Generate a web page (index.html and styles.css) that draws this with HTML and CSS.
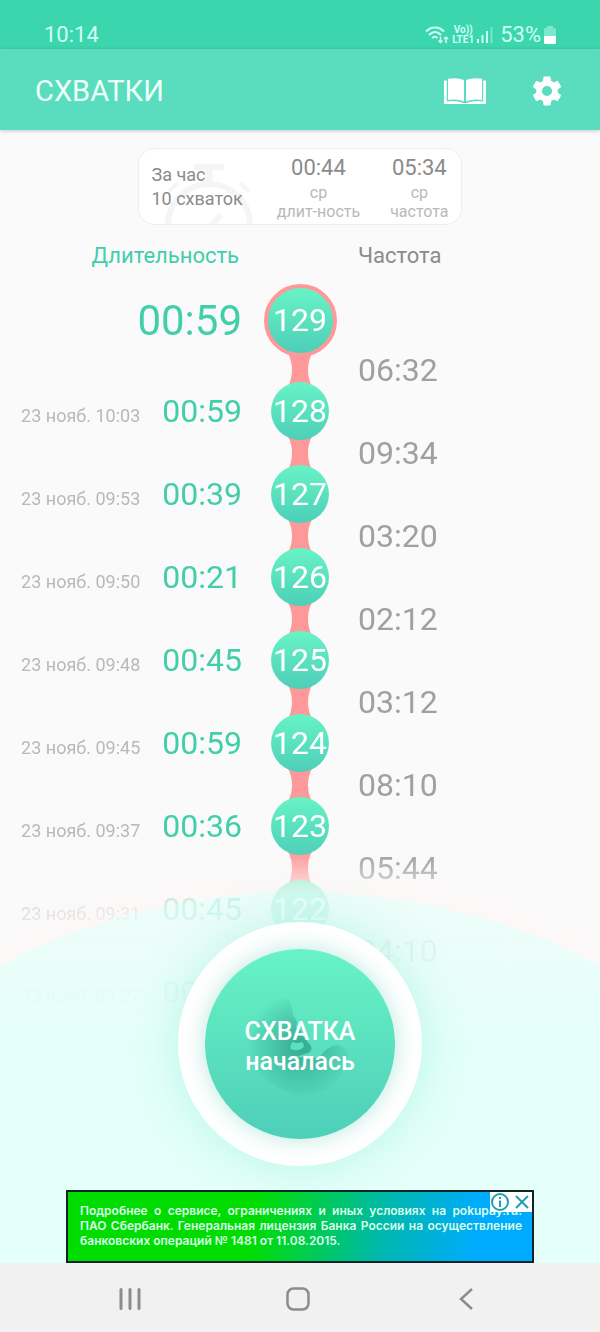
FILE: index.html
```html
<!DOCTYPE html>
<html lang="ru">
<head>
  <meta charset="UTF-8">
  <meta name="viewport" content="width=device-width, initial-scale=1.0">
  <title>Схватки</title>
  <link rel="stylesheet" href="styles.css">
</head>
<body>
  <div class="status-bar">
    <span class="clock">10:14</span>
    <div class="status-icons">
      <svg width="24" height="18" viewBox="0 0 24 18" fill="none" stroke="currentColor" stroke-width="2">
        <path d="M1 5.500C6 0 14 0 19 5.500M4 9C8 5 12 5 16 9M7 12C9 10.500 11 10.500 12.500 12"/>
        <path d="M15.500 10.500v6M13.500 14.500l2 2 2-2M21 17v-6M19 13l2-2 2 2" stroke-width="1.500"/>
      </svg>
      <span class="lte"><span>Vo))</span><span>LTE1</span></span>
      <svg width="16" height="17" viewBox="0 0 16 17" fill="currentColor">
        <path d="M0 13h2v4H0zM4.500 9h2v8h-2zM9 5h2v12H9z"/>
        <path d="M13.500 1h2v16h-2z" opacity=".4"/>
      </svg>
      <span class="percent">53%</span>
      <svg width="12" height="18" viewBox="0 0 12 18" fill="currentColor">
        <path d="M0 3.500A1.500 1.500 0 0 1 1.500 2H3V0h6v2h1.500A1.500 1.500 0 0 1 12 3.500V10H0z" opacity=".45"/>
        <path d="M0 10h12v6.500a1.500 1.500 0 0 1-1.500 1.500h-9A1.500 1.500 0 0 1 0 16.500z" fill="#fff"/>
      </svg>
    </div>
  </div>

  <header class="app-bar">
    <h1>СХВАТКИ</h1>
    <button class="icon-button" aria-label="Справка">
      <svg width="42" height="26" viewBox="0 0 42 26" fill="#fff">
        <path d="M4 .800Q13-1 20 2v21.500Q13 20.500 4 22z"/>
        <path d="M38 .800Q29-1 22 2v21.500Q29 20.500 38 22z"/>
        <path d="M0 2.500h2.800v21Q12 22 19.500 25h3Q30 22 39.200 23.500v-21H42V26H0z"/>
      </svg>
    </button>
    <button class="icon-button" aria-label="Настройки">
      <svg width="36" height="36" viewBox="0 0 24 24" fill="#fff">
        <path d="M19.140 12.940c.040-.300.060-.610.060-.940s-.020-.640-.070-.940l2.030-1.580a.490.490 0 0 0 .120-.610l-1.920-3.320a.490.490 0 0 0-.590-.220l-2.390.960a7 7 0 0 0-1.620-.940l-.360-2.540a.480.480 0 0 0-.480-.410h-3.840a.480.480 0 0 0-.470.410l-.360 2.540a7.200 7.200 0 0 0-1.620.940l-2.390-.960a.480.480 0 0 0-.590.220L2.740 8.870a.480.480 0 0 0 .120.610l2.030 1.580a6 6 0 0 0 0 1.880l-2.030 1.580a.490.490 0 0 0-.120.610l1.920 3.320c.120.220.370.290.590.220l2.390-.960c.500.380 1.030.700 1.620.940l.360 2.540c.050.240.240.410.480.410h3.840c.240 0 .440-.170.470-.410l.360-2.540a7 7 0 0 0 1.620-.940l2.390.960c.220.080.470 0 .590-.220l1.920-3.320a.480.480 0 0 0-.120-.610zM12 15.400a3.400 3.400 0 1 1 0-6.800 3.400 3.400 0 0 1 0 6.800z"/>
      </svg>
    </button>
  </header>

  <main class="content">
    <section class="summary">
      <svg class="stopwatch" width="96" height="60" viewBox="0 0 96 60" fill="none" stroke="#f5f5f5">
        <circle cx="48" cy="61" r="41" stroke-width="6"/>
        <path d="M33 3h30M48 3v18" stroke-width="7"/>
        <path d="M8 27l9-8M88 27l-9-8" stroke-width="4"/>
        <path d="M48 64l12-13" stroke-width="6"/>
      </svg>
      <p class="summary-total">За час<br>10 схваток</p>
      <div class="stat">
        <strong>00:44</strong>
        <span>ср<br>длит-ность</span>
      </div>
      <div class="stat">
        <strong>05:34</strong>
        <span>ср<br>частота</span>
      </div>
    </section>

    <div class="columns">
      <h2 class="col-duration">Длительность</h2>
      <h2 class="col-frequency">Частота</h2>
    </div>

    <ol class="timeline">
      <li class="current">
        <div class="record"><span class="duration">00:59</span></div>
        <div class="node"><span class="bubble">129</span></div>
      </li>
      <li>
        <div class="record"><time>23 нояб. 10:03</time><span class="duration">00:59</span></div>
        <div class="node"><svg class="link" viewBox="0 0 24 34"><path d="M0 0Q8 17 0 34h24Q16 17 24 0z"/></svg><span class="bubble">128</span></div>
        <span class="frequency">06:32</span>
      </li>
      <li>
        <div class="record"><time>23 нояб. 09:53</time><span class="duration">00:39</span></div>
        <div class="node"><svg class="link" viewBox="0 0 24 34"><path d="M0 0Q8 17 0 34h24Q16 17 24 0z"/></svg><span class="bubble">127</span></div>
        <span class="frequency">09:34</span>
      </li>
      <li>
        <div class="record"><time>23 нояб. 09:50</time><span class="duration">00:21</span></div>
        <div class="node"><svg class="link" viewBox="0 0 24 34"><path d="M0 0Q8 17 0 34h24Q16 17 24 0z"/></svg><span class="bubble">126</span></div>
        <span class="frequency">03:20</span>
      </li>
      <li>
        <div class="record"><time>23 нояб. 09:48</time><span class="duration">00:45</span></div>
        <div class="node"><svg class="link" viewBox="0 0 24 34"><path d="M0 0Q8 17 0 34h24Q16 17 24 0z"/></svg><span class="bubble">125</span></div>
        <span class="frequency">02:12</span>
      </li>
      <li>
        <div class="record"><time>23 нояб. 09:45</time><span class="duration">00:59</span></div>
        <div class="node"><svg class="link" viewBox="0 0 24 34"><path d="M0 0Q8 17 0 34h24Q16 17 24 0z"/></svg><span class="bubble">124</span></div>
        <span class="frequency">03:12</span>
      </li>
      <li>
        <div class="record"><time>23 нояб. 09:37</time><span class="duration">00:36</span></div>
        <div class="node"><svg class="link" viewBox="0 0 24 34"><path d="M0 0Q8 17 0 34h24Q16 17 24 0z"/></svg><span class="bubble">123</span></div>
        <span class="frequency">08:10</span>
      </li>
      <li>
        <div class="record"><time>23 нояб. 09:31</time><span class="duration">00:45</span></div>
        <div class="node"><svg class="link" viewBox="0 0 24 34"><path d="M0 0Q8 17 0 34h24Q16 17 24 0z"/></svg><span class="bubble">122</span></div>
        <span class="frequency">05:44</span>
      </li>
      <li>
        <div class="record"><time>23 нояб. 09:27</time><span class="duration">00:45</span></div>
        <div class="node"><svg class="link" viewBox="0 0 24 34"><path d="M0 0Q8 17 0 34h24Q16 17 24 0z"/></svg><span class="bubble">121</span></div>
        <span class="frequency">04:10</span>
      </li>
    </ol>

    <div class="panel">
      <div class="dome"></div>
      <button class="start-button">
        <span class="start-face">
          <svg class="figure" width="120" height="120" viewBox="0 0 120 120">
            <defs>
              <radialGradient id="body" gradientUnits="userSpaceOnUse" cx="62" cy="62" r="54">
                <stop offset="0" stop-color="#2f9f88" stop-opacity=".85"/>
                <stop offset=".4" stop-color="#2f9f88" stop-opacity=".5"/>
                <stop offset="1" stop-color="#2f9f88" stop-opacity="0"/>
              </radialGradient>
            </defs>
            <path fill="url(#body)" fill-rule="evenodd" d="M30 14C43 7 51 14 53 24l1 7 4 7-1 6 5 2 1 5 9 11q2 5-3 7l-13 4 24 1q8-12 18-13 8 1 12 10l-5 10c-2 12-10 22-22 27-18 6-36 3-50-8C20 90 6 78 6 64 6 50 14 44 20 36 18 26 22 18 30 14zM54 58q-4 3-2 7 6 3 12-1 2-3-1-6-5 2-9 0z"/>
          </svg>
          <span class="start-text">СХВАТКА<br>началась</span>
        </span>
      </button>
      <div class="ad">
        <a href="#">
          <span>Подробнее о сервисе, ограничениях и иных условиях на pokupay.ru.</span>
          <span>ПАО Сбербанк. Генеральная лицензия Банка России на осуществление</span>
          банковских операций № 1481 от 11.08.2015.
        </a>
        <div class="ad-controls">
          <button aria-label="Об этой рекламе">
            <svg width="20" height="20" viewBox="0 0 20 20" fill="none" stroke="#1f9fb5" stroke-width="2">
              <circle cx="10" cy="10" r="8"/>
              <path d="M10 8.500V15M10 5v2"/>
            </svg>
          </button>
          <button aria-label="Закрыть рекламу">
            <svg width="20" height="20" viewBox="0 0 20 20" fill="none" stroke="#1f9fb5" stroke-width="2">
              <path d="M4 4l12 12M16 4L4 16"/>
            </svg>
          </button>
        </div>
      </div>
    </div>
  </main>

  <nav class="nav-bar">
    <button aria-label="Недавние приложения">
      <svg width="24" height="24" viewBox="0 0 24 24" fill="none" stroke="#8c8c8c" stroke-width="3" stroke-linecap="round">
        <path d="M3 2.500v19M12 2.500v19M21 2.500v19"/>
      </svg>
    </button>
    <button aria-label="Главный экран">
      <svg width="24" height="24" viewBox="0 0 24 24" fill="none" stroke="#8c8c8c" stroke-width="2.500">
        <rect x="1.500" y="1.500" width="21" height="21" rx="6"/>
      </svg>
    </button>
    <button aria-label="Назад">
      <svg width="24" height="24" viewBox="0 0 24 24" fill="none" stroke="#8c8c8c" stroke-width="2.500">
        <path d="M18 2L7 12l11 10"/>
      </svg>
    </button>
  </nav>
</body>
</html>
```
FILE: styles.css
```css
* {
  box-sizing: border-box;
}

body {
  margin: 0;
  min-height: 100vh;
  display: flex;
  flex-direction: column;
  background: #fafafa;
  font-family: Roboto, "Liberation Sans", sans-serif;
  color: #8b8b8b;
}

button {
  margin: 0;
  padding: 0;
  border: none;
  background: none;
  font: inherit;
  cursor: pointer;
}

svg {
  display: block;
}

h1,
h2,
p,
ol {
  margin: 0;
  padding: 0;
  font-weight: 400;
}

/* Top bars */

.status-bar {
  display: flex;
  justify-content: space-between;
  align-items: center;
  padding: 20px 44px 0;
  height: 49px;
  background: #3bd6ae;
  color: #d0fff2;
  font-size: 22px;
}

.status-icons {
  display: flex;
  align-items: center;
  gap: 3px;
}

.lte {
  display: flex;
  flex-direction: column;
  align-items: center;
  font-size: 10px;
  font-weight: 700;
  line-height: 10px;
}

.percent {
  margin-left: 4px;
}

.app-bar {
  position: relative;
  display: flex;
  align-items: center;
  gap: 43px;
  height: 81px;
  padding: 2px 35px 0;
  background: #5addbe;
  box-shadow: 0 1px 4px rgba(0, 0, 0, 0.2);
}

.app-bar h1 {
  flex: 1;
  color: #eefffa;
  font-size: 29px;
}

/* Main screen */

.content {
  position: relative;
  flex: 1;
  padding-top: 18px;
  overflow: hidden;
}

.summary {
  position: relative;
  display: flex;
  align-items: center;
  width: fit-content;
  height: 77px;
  margin: 0 auto;
  padding: 0 12px;
  border: 1px solid #eeeeee;
  border-radius: 16px;
  background: #fff;
  overflow: hidden;
}

.stopwatch {
  position: absolute;
  left: 22px;
  bottom: 0;
}

.summary-total {
  position: relative;
  margin-right: 34px;
  font-size: 18px;
  line-height: 24px;
}

.stat {
  display: flex;
  flex-direction: column;
  align-items: center;
  text-align: center;
}

.stat + .stat {
  margin-left: 30px;
}

.stat strong {
  font-size: 22px;
  font-weight: 400;
  line-height: 30px;
}

.stat span {
  color: #b9b9b9;
  font-size: 16px;
  line-height: 19px;
}

.columns {
  display: grid;
  grid-template-columns: 1fr 72px 1fr;
  margin: 16px 0 13px;
  line-height: 30px;
}

.columns h2 {
  font-size: 22px;
}

.col-duration {
  padding-right: 25px;
  color: #43ceaa;
  text-align: right;
}

.col-frequency {
  grid-column: 3;
  padding-left: 22px;
}

/* Timeline */

.timeline {
  list-style: none;
  mask-image: linear-gradient(#000 570px, rgba(0, 0, 0, 0.5) 605px, rgba(0, 0, 0, 0.35) 640px, rgba(0, 0, 0, 0.3));
}

.timeline li {
  display: grid;
  grid-template-columns: 1fr 72px 1fr;
  align-items: end;
  height: 83px;
}

.timeline .current {
  height: 73px;
}

.record {
  display: flex;
  justify-content: flex-end;
  align-items: baseline;
  gap: 22px;
  padding-right: 22px;
}

.record time {
  color: #b9b9b9;
  font-size: 18px;
}

.duration {
  color: #43ceaa;
  font-size: 32px;
  line-height: 58px;
}

.current .duration {
  font-size: 42px;
  line-height: 72px;
}

.node {
  display: flex;
  flex-direction: column;
  align-items: center;
}

.link {
  width: 24px;
  height: 34px;
  margin: -4px 0 -5px;
  fill: #ff9999;
}

.bubble {
  position: relative;
  width: 58px;
  border-radius: 50%;
  background: linear-gradient(#68f3c6, #4dcfb8);
  color: #fff;
  font-size: 32px;
  line-height: 58px;
  text-align: center;
}

.current .bubble {
  width: 73px;
  border: 4px solid #ff9999;
  line-height: 65px;
}

.frequency {
  align-self: start;
  padding-left: 22px;
  color: #a0a0a0;
  font-size: 32px;
  line-height: 26px;
}

/* Start panel over the end of the timeline */

.panel {
  position: absolute;
  left: 0;
  right: 0;
  bottom: 0;
  display: flex;
  flex-direction: column;
  align-items: center;
  gap: 24px;
  padding-top: 30px;
}

.dome {
  position: absolute;
  top: 0;
  left: 50%;
  width: 1306px;
  height: 1306px;
  border-radius: 50%;
  transform: translateX(-50%);
  background: linear-gradient(rgba(229, 255, 249, 0.6), rgba(229, 255, 249, 0.65) 40px, rgba(229, 255, 249, 0.85) 110px, #e5fff9 150px);
  box-shadow: 0 0 40px 4px rgba(255, 246, 244, 0.9);
}

.start-button {
  position: relative;
  display: flex;
  padding: 27px;
  border-radius: 50%;
  background: #fff;
  box-shadow: 0 0 50px rgba(80, 225, 190, 0.3);
}

.start-face {
  position: relative;
  display: flex;
  justify-content: center;
  align-items: center;
  width: 190px;
  height: 190px;
  padding-top: 5px;
  border-radius: 50%;
  background: linear-gradient(#68f3c6, #4dcfb8);
  box-shadow: 0 0 22px rgba(80, 200, 170, 0.4);
}

.figure {
  position: absolute;
  top: 35px;
  left: 34px;
}

.start-text {
  position: relative;
  color: #fff;
  font-size: 25px;
  font-weight: 500;
  line-height: 30px;
}

.ad {
  position: relative;
  width: 468px;
  max-width: 100%;
  height: 73px;
  padding: 11px 10px 0 12px;
  border: 2px solid #10252a;
  background: linear-gradient(100deg, #00dc00 40%, #00b8b0 68%, #00aaff 88%);
}

.ad a {
  display: block;
  color: #d8ffe8;
  font-family: Inter, sans-serif;
  font-size: 12px;
  font-weight: 600;
  line-height: 15px;
  text-decoration: none;
}

.ad a span {
  display: block;
  text-align-last: justify;
}

.ad-controls {
  position: absolute;
  top: 0;
  right: 0;
  display: flex;
  gap: 2px;
  background: #fff;
}

/* System navigation */

.nav-bar {
  display: flex;
  justify-content: space-between;
  align-items: center;
  height: 69px;
  padding: 3px 122px 0 118px;
  background: #f1f1f1;
}
```
